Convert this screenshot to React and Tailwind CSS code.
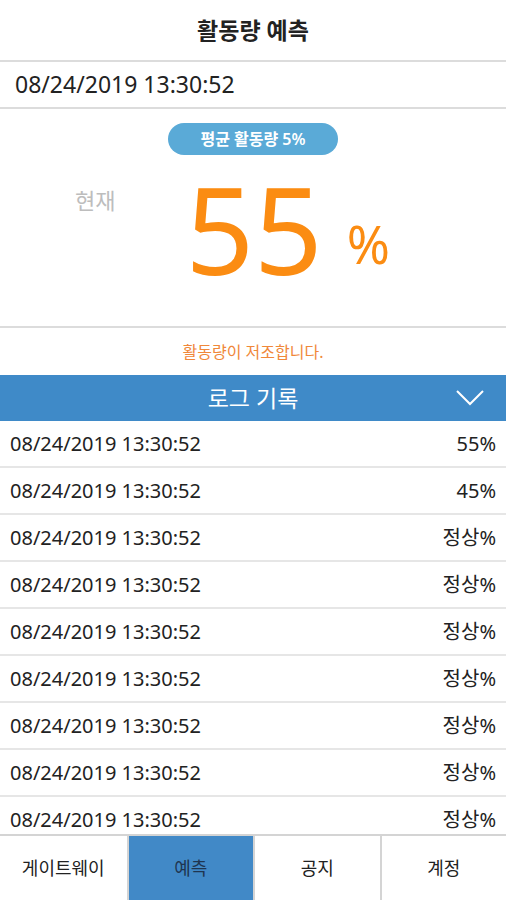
import React from "react";

const rows = [
  "55%",
  "45%",
  "정상%",
  "정상%",
  "정상%",
  "정상%",
  "정상%",
  "정상%",
  "정상%",
];

const tabs = ["게이트웨이", "예측", "공지", "계정"];

const App = () => {
  return (
    <div
      className="w-[506px] h-[900px] flex flex-col bg-white overflow-hidden text-[#222]"
      style={{ fontFamily: '"Noto Sans", "Noto Sans CJK KR", sans-serif' }}
    >
      <div className="h-[62px] shrink-0 flex items-center justify-center border-b-2 border-[#dcdcdc]">
        <h1 className="text-[23px] font-bold text-[#222]">활동량 예측</h1>
      </div>
      <div className="h-[47px] shrink-0 flex items-center pl-[15px] border-b-2 border-[#dcdcdc]">
        <span className="text-[23px]">08/24/2019 13:30:52</span>
      </div>

      <div className="h-[219px] shrink-0 flex flex-col items-center border-b-2 border-[#dcdcdc]">
        <div className="mt-[14px] w-[170px] h-[32px] rounded-full bg-[#5aaad7] flex items-center justify-center text-white text-[16px] font-semibold">
          평균 활동량 5%
        </div>
        <div className="w-full flex items-start mt-[14px]">
          <span className="ml-[75px] mt-[20px] text-[22px] leading-none text-[#bdbdbd]">현재</span>
          <span className="ml-[70px] text-[120px] leading-[120px] text-[#fb8c12]">55</span>
          <span className="ml-[24px] mt-[49px] text-[52px] leading-none text-[#fb8c12]">%</span>
        </div>
      </div>

      <div className="h-[47px] shrink-0 flex items-center justify-center">
        <span className="text-[16px] text-[#f0883a]">활동량이 저조합니다.</span>
      </div>

      <div className="h-[46px] shrink-0 bg-[#3f8ac8] flex items-center justify-center relative">
        <span className="text-white text-[23px]">로그 기록</span>
        <svg
          className="absolute right-[22px] top-[15px]"
          width="28"
          height="16"
          viewBox="0 0 28 16"
          fill="none"
          stroke="white"
          strokeWidth="2"
        >
          <path d="M1 1 L14 14 L27 1" />
        </svg>
      </div>

      <div className="flex-1 overflow-hidden">
        {rows.map((r, i) => (
          <div
            key={i}
            className="h-[47px] flex items-center justify-between pl-[10px] pr-[10px] border-b-2 border-[#e6e6e6]"
          >
            <span className="text-[20px]">08/24/2019 13:30:52</span>
            <span className="text-[20px]">{r}</span>
          </div>
        ))}
      </div>

      <div className="h-[66px] shrink-0 grid grid-cols-4 border-t-2 border-[#d4d4d4]">
        {tabs.map((t, i) => (
          <div
            key={t}
            className={
              "flex items-center justify-center text-[18px] " +
              (i > 0 ? "border-l-2 border-[#d4d4d4] " : "") +
              (i === 1 ? "bg-[#4189c7] text-[#1f3550]" : "bg-white text-[#222]")
            }
          >
            {t}
          </div>
        ))}
      </div>
    </div>
  );
};

export default App;
